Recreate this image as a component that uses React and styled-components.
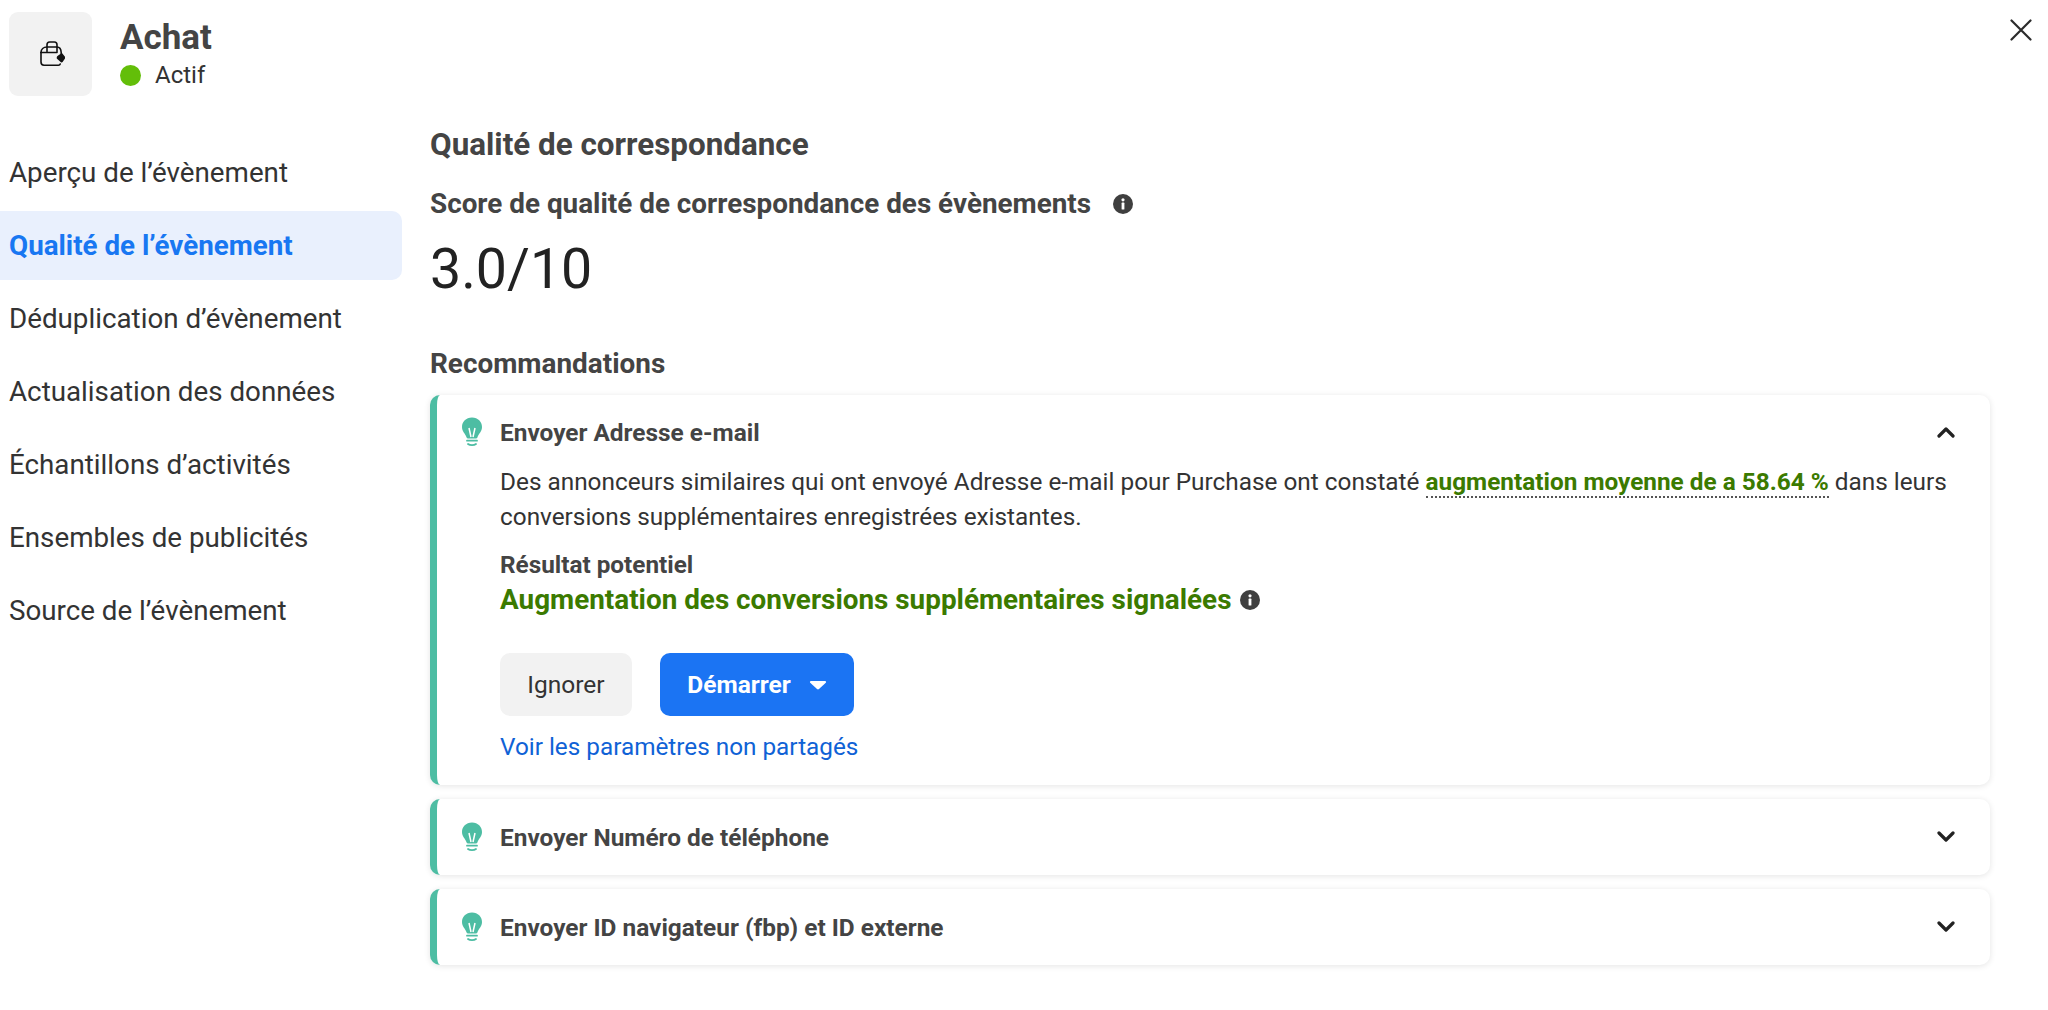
import React from "react";
import styled, { createGlobalStyle } from "styled-components";

const Global = createGlobalStyle`
  html, body { margin: 0; padding: 0; background: #fff; }
  body { font-family: Roboto, "Liberation Sans", sans-serif; color: #1c1e21; -webkit-font-smoothing: antialiased; }
  * { box-sizing: border-box; }
`;

const Page = styled.div`
  position: relative;
  width: 2048px;
  height: 1010px;
  overflow: hidden;
  background: #fff;
`;
const Header = styled.header`
  display: flex;
  align-items: flex-start;
  gap: 28px;
  height: 96px;
  margin-top: 12px;
  padding-left: 9px;
`;
const IconBox = styled.div`
  width: 83px;
  height: 84px;
  border-radius: 9px;
  background: #f2f2f2;
  display: flex;
  align-items: center;
  justify-content: center;
  padding-left: 3px;
`;
const HeaderText = styled.div`
  display: flex;
  flex-direction: column;
  padding-top: 6px;
`;
const Title = styled.div`
  font-size: 35px;
  line-height: 40px;
  font-weight: 700;
  color: #444;
`;
const Status = styled.div`
  display: flex;
  align-items: center;
  gap: 14px;
  font-size: 24px;
  line-height: 34px;
  color: #333;
`;
const Dot = styled.span`
  width: 21px;
  height: 21px;
  border-radius: 50%;
  background: #63be09;
`;
const Close = styled.button`
  position: absolute;
  top: 19px;
  right: 16px;
  padding: 0;
  border: 0;
  background: none;
  display: flex;
`;
const Body = styled.div`
  display: grid;
  grid-template-columns: 402px 1560px;
  column-gap: 28px;
`;
const Nav = styled.nav`
  display: flex;
  flex-direction: column;
  gap: 4px;
  padding-top: 30px;
`;
const NavItem = styled.div`
  height: 69px;
  display: flex;
  align-items: center;
  padding-left: 9px;
  border-radius: 0 10px 10px 0;
  font-size: 27.75px;
  font-weight: ${p => (p.$active ? 700 : 400)};
  color: ${p => (p.$active ? "#1877f2" : "#333")};
  background: ${p => (p.$active ? "#e9f0fd" : "transparent")};
`;
const Main = styled.main`
  display: flex;
  flex-direction: column;
`;
const Heading = styled.h2`
  margin: 19px 0 0;
  font-size: 31.4px;
  line-height: 36px;
  font-weight: 700;
  color: #444;
`;
const ScoreLabel = styled.div`
  display: flex;
  align-items: center;
  gap: 22px;
  margin-top: 25px;
  font-size: 27.85px;
  line-height: 32px;
  font-weight: 700;
  color: #444;
`;
const Score = styled.div`
  margin-top: 14px;
  font-size: 55.5px;
  line-height: 72px;
  font-weight: 400;
  color: #222;
`;
const SubHeading = styled.h3`
  margin: 41px 0 0;
  font-size: 27.9px;
  line-height: 34px;
  font-weight: 700;
  color: #444;
`;
const Cards = styled.div`
  display: flex;
  flex-direction: column;
  gap: 14px;
  margin-top: 14px;
`;
const Card = styled.section`
  border-radius: 10px;
  border-left: 7px solid #4dbda3;
  background: #fff;
  box-shadow: 0 1px 6px rgba(0, 0, 0, 0.11);
  padding: 0 35px 0 24px;
  height: ${p => (p.$open ? "390px" : "76px")};
`;
const CardHead = styled.div`
  display: flex;
  align-items: center;
  height: 76px;
  margin-top: ${p => (p.$open ? "-1px" : "0")};
`;
const CardTitle = styled.div`
  margin-left: 17px;
  flex: 1;
  font-size: 24.4px;
  font-weight: 700;
  color: #444;
`;
const CardBody = styled.div`
  margin-left: 39px;
  margin-top: -6px;
`;
const Para = styled.p`
  margin: 0;
  font-size: 24.35px;
  line-height: 35px;
  color: #333;
  white-space: nowrap;
`;
const Highlight = styled.span`
  font-weight: 700;
  color: #3b7a00;
  border-bottom: 2px dotted #555;
`;
const ResultLabel = styled.div`
  margin-top: 14px;
  font-size: 24.3px;
  line-height: 34px;
  font-weight: 700;
  color: #444;
`;
const ResultValue = styled.div`
  display: flex;
  align-items: center;
  gap: 9px;
  font-size: 27.85px;
  line-height: 36px;
  font-weight: 700;
  color: #3b7a00;
`;
const Actions = styled.div`
  display: flex;
  gap: 28px;
  margin-top: 35px;
`;
const Button = styled.button`
  height: 63px;
  border: 0;
  border-radius: 10px;
  display: flex;
  align-items: center;
  justify-content: center;
  gap: 18px;
  font-family: inherit;
  font-size: 24.5px;
  width: ${p => (p.$primary ? "194px" : "132px")};
  font-weight: ${p => (p.$primary ? 700 : 400)};
  color: ${p => (p.$primary ? "#fff" : "#333")};
  background: ${p => (p.$primary ? "#1b74f3" : "#f2f2f2")};
`;
const LinkText = styled.a`
  display: block;
  margin-top: 14px;
  font-size: 24.3px;
  line-height: 34px;
  color: #0f62d6;
`;

const Bag = () => (
  <svg width="26" height="26" viewBox="0 0 26 26" fill="none" stroke="#111" strokeWidth="1.6" strokeLinecap="round">
    <path d="M2 11.5 V21 C2 23 3 24.2 5 24.2 H19.5 C20.5 24.2 21 23.7 21.2 23" />
    <path d="M2 11.5 H18" />
    <path d="M2 11.5 C2 8.2 4.5 6 8 6 H18 C20.5 6 22 8 22.2 11.5 V13" />
    <path d="M8 10.5 V3.8 C8 2 9 1 10.6 1 H15.4 C17 1 18 2 18 3.8 V10.5" />
    <path d="M18.5 15 L22 12.5 C22.6 12.2 23.2 12.3 23.6 12.8 L26 15.8 V17.6 L23.6 21 C23.2 21.6 22.4 21.6 21.9 21.2 L18 17.8 C17.4 17.1 17.8 15.6 18.5 15Z" fill="#111" stroke="none" />
  </svg>
);
const Info = ({ size = 20 }) => (
  <svg width={size} height={size} viewBox="0 0 20 20">
    <circle cx="10" cy="10" r="10" fill="#3f3f3f" />
    <rect x="8.6" y="8.6" width="2.8" height="7" rx="0.6" fill="#fff" />
    <circle cx="10" cy="5.8" r="1.6" fill="#fff" />
  </svg>
);
const Bulb = () => (
  <svg width="22" height="30" viewBox="0 0 22 30" style={{ flexShrink: 0 }}>
    <path d="M11 0.5 C5 0.5 1 4.8 1 10 C1 14.5 4.2 16.5 5.6 20.5 C5.9 21.2 6.3 21.5 7 21.5 H15 C15.7 21.5 16.1 21.2 16.4 20.5 C17.8 16.5 21 14.5 21 10 C21 4.8 17 0.5 11 0.5Z" fill="#4dbda3" />
    <path d="M8 11 L10 20 M14 11 L12 20" stroke="#fff" strokeWidth="1.5" fill="none" />
    <path d="M6 23.7 H16" stroke="#4dbda3" strokeWidth="1.8" strokeLinecap="round" />
    <path d="M7 27 C9 28.6 13 28.6 15 27" stroke="#4dbda3" strokeWidth="1.8" strokeLinecap="round" fill="none" />
  </svg>
);
const Chevron = ({ up }) => (
  <svg width="18" height="12" viewBox="0 0 18 12" fill="none" stroke="#222" strokeWidth="3.2">
    <path d={up ? "M2 10 L9 3 L16 10" : "M2 2 L9 9 L16 2"} strokeLinecap="round" strokeLinejoin="round" />
  </svg>
);

const navItems = [
  "Aperçu de l’évènement",
  "Qualité de l’évènement",
  "Déduplication d’évènement",
  "Actualisation des données",
  "Échantillons d’activités",
  "Ensembles de publicités",
  "Source de l’évènement",
];

export default function App() {
  return (
    <Page>
      <Global />
      <Header>
        <IconBox><Bag /></IconBox>
        <HeaderText>
          <Title>Achat</Title>
          <Status><Dot />Actif</Status>
        </HeaderText>
      </Header>
      <Close aria-label="Fermer">
        <svg width="22" height="22" viewBox="0 0 22 22" stroke="#2b2b2b" strokeWidth="2.2" strokeLinecap="round">
          <path d="M1.5 1.5 L20.5 20.5 M20.5 1.5 L1.5 20.5" />
        </svg>
      </Close>
      <Body>
        <Nav>
          {navItems.map((t, i) => (
            <NavItem key={t} $active={i === 1}>{t}</NavItem>
          ))}
        </Nav>
        <Main>
          <Heading>Qualité de correspondance</Heading>
          <ScoreLabel>Score de qualité de correspondance des évènements <Info /></ScoreLabel>
          <Score>3.0/10</Score>
          <SubHeading>Recommandations</SubHeading>
          <Cards>
            <Card $open>
              <CardHead $open>
                <Bulb />
                <CardTitle>Envoyer Adresse e-mail</CardTitle>
                <Chevron up />
              </CardHead>
              <CardBody>
                <Para>
                  Des annonceurs similaires qui ont envoyé Adresse e-mail pour Purchase ont constaté{" "}
                  <Highlight>augmentation moyenne de a 58.64 %</Highlight> dans leurs
                  <br />
                  conversions supplémentaires enregistrées existantes.
                </Para>
                <ResultLabel>Résultat potentiel</ResultLabel>
                <ResultValue>Augmentation des conversions supplémentaires signalées <Info /></ResultValue>
                <Actions>
                  <Button>Ignorer</Button>
                  <Button $primary>
                    Démarrer
                    <svg width="18" height="10" viewBox="0 0 18 10">
                      <path d="M2 1 H16 C17 1 17.4 2 16.8 2.7 L10 9 C9.4 9.5 8.6 9.5 8 9 L1.2 2.7 C0.6 2 1 1 2 1Z" fill="#fff" />
                    </svg>
                  </Button>
                </Actions>
                <LinkText>Voir les paramètres non partagés</LinkText>
              </CardBody>
            </Card>
            <Card>
              <CardHead>
                <Bulb />
                <CardTitle>Envoyer Numéro de téléphone</CardTitle>
                <Chevron />
              </CardHead>
            </Card>
            <Card>
              <CardHead>
                <Bulb />
                <CardTitle>Envoyer ID navigateur (fbp) et ID externe</CardTitle>
                <Chevron />
              </CardHead>
            </Card>
          </Cards>
        </Main>
      </Body>
    </Page>
  );
}
